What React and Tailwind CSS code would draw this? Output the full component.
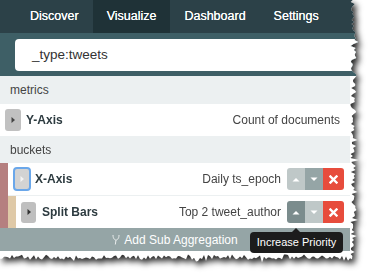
import React from 'react';

// jagged "torn paper" outline for the screenshot crop
function tornClip() {
  let seed = 11;
  const rnd = () => {
    seed = (seed * 16807) % 2147483647;
    return seed / 2147483647;
  };
  const pts = ['0px 0px'];
  for (let y = 0; y <= 256; y += 2) {
    const spike = rnd() > 0.8 ? rnd() * 4 : 0;
    pts.push(`${(353 + rnd() * 5 - 2.5 + spike).toFixed(1)}px ${y}px`);
  }
  for (let x = 352; x >= 0; x -= 2) {
    const spike = rnd() > 0.8 ? rnd() * 4 : 0;
    pts.push(`${x}px ${(257 + rnd() * 5 - 2.5 + spike).toFixed(1)}px`);
  }
  pts.push('0px 258px');
  return `polygon(${pts.join(',')})`;
}

const Caret = ({ color = '#333' }) => (
  <svg width="6" height="8" viewBox="0 0 6 8">
    <path d="M1.5 1 L5 4 L1.5 7 Z" fill={color} />
  </svg>
);

const Arrow = ({ up }) => (
  <svg width="8" height="5" viewBox="0 0 8 5">
    {up ? <path d="M0.5 4.5 L4 1 L7.5 4.5 Z" fill="#fff" /> : <path d="M0.5 0.5 L4 4 L7.5 0.5 Z" fill="#fff" />}
  </svg>
);

const Cross = () => (
  <svg width="9" height="9" viewBox="0 0 9 9">
    <path d="M1.5 1.5 L7.5 7.5 M7.5 1.5 L1.5 7.5" stroke="#fff" strokeWidth="2.4" strokeLinecap="square" />
  </svg>
);

function Controls({ upBg, downBg }) {
  return (
    <div className="flex h-[22px] ml-[6px]">
      <div className={`w-[18px] flex items-center justify-center rounded-l-[3px] ${upBg}`}><Arrow up /></div>
      <div className={`w-[18px] flex items-center justify-center ${downBg}`}><Arrow /></div>
      <div className="w-[21px] flex items-center justify-center bg-[#e74c3c] rounded-r-[3px]"><Cross /></div>
    </div>
  );
}

export default function App() {
  const tabs = ['Discover', 'Visualize', 'Dashboard', 'Settings'];

  return (
    <div className="w-[372px] h-[280px] bg-white overflow-hidden font-['Liberation_Sans',Arial,sans-serif]">
      <div className="[filter:drop-shadow(3px_4px_3px_rgba(0,0,0,0.85))]">
        <div className="relative w-[364px] h-[266px] bg-white" style={{ clipPath: tornClip() }}>

          {/* Nav */}
          <div className="h-[33px] bg-[#2c4148] flex pl-[16px]">
            {tabs.map((t) => (
              <div
                key={t}
                className={`px-[14px] flex items-center text-[12.5px] text-white [text-shadow:0_0_0.4px_#fff] ${t === 'Visualize' ? 'bg-[#1f3237]' : ''}`}
              >
                {t}
              </div>
            ))}
          </div>

          {/* Search */}
          <div className="h-[43px] bg-[#3e5f66] pl-[15px] pt-[6px]">
            <div className="h-[32px] w-[360px] bg-white rounded-[4px] flex items-center pl-[17px] text-[13.5px] text-[#333]">
              _type:tweets
            </div>
          </div>

          {/* Sidebar */}
          <div className="w-[350px] flex flex-col">
            <div className="h-[28px] bg-[#ecf0f1] flex items-center px-[10px] text-[12px] text-[#444]">metrics</div>

            <div className="h-[32px] flex items-center pl-[5px] pr-[10px] bg-white">
              <div className="w-[16px] h-[22px] rounded-[3px] bg-[#c1c1c1] flex items-center justify-center">
                <Caret color="#444" />
              </div>
              <span className="ml-[5px] text-[12px] font-bold text-[#2d3b40]">Y-Axis</span>
              <span className="ml-auto text-[12px] text-[#444]">Count of documents</span>
            </div>

            <div className="h-[27px] bg-[#ecf0f1] flex items-center px-[10px] text-[12px] text-[#444]">buckets</div>

            <div className="flex bg-[#b57f80]">
              <div className="w-[8px]" />
              <div className="flex-1 flex flex-col">
                <div className="h-[33px] flex items-center pl-[5px] pr-[6px] bg-white border-b border-[#ecf0f1]">
                  <div className="w-[18px] h-[24px] rounded-[4px] border-2 border-[#6aa7ea] bg-[#d3d3d3] flex items-center justify-center">
                    <Caret color="#f4f4f4" />
                  </div>
                  <span className="ml-[4px] text-[12px] font-bold text-[#2d3b40]">X-Axis</span>
                  <span className="ml-auto text-[12px] text-[#444]">Daily ts_epoch</span>
                  <Controls upBg="bg-[#bfc8c8]" downBg="bg-[#95a5a6]" />
                </div>
                <div className="flex h-[32px] bg-[#dfc9a7]">
                  <div className="w-[8px]" />
                  <div className="flex-1 flex items-center pl-[5px] pr-[6px] bg-white">
                    <div className="w-[15px] h-[21px] rounded-[3px] bg-[#bfbfbf] flex items-center justify-center">
                      <Caret color="#333" />
                    </div>
                    <span className="ml-[6px] text-[12px] font-bold text-[#2d3b40]">Split Bars</span>
                    <span className="ml-auto text-[12px] text-[#444]">Top 2 tweet_author</span>
                    <Controls upBg="bg-[#7b8c8d]" downBg="bg-[#bfc8c8]" />
                  </div>
                </div>
              </div>
            </div>

            <div className="h-[23px] bg-[#95a5a6] flex items-center justify-center text-[12px] text-white">
              <svg width="8" height="11" viewBox="0 0 8 11" className="mr-[4px] opacity-80">
                <path d="M1 1 C1 5 3 6 4 6 C5 6 7 5 7 1 M4 6 L3.3 10.5" stroke="#fff" strokeWidth="1" fill="none" />
              </svg>
              Add Sub Aggregation
            </div>
          </div>

          {/* Tooltip */}
          <div className="absolute left-[250px] top-[232px] w-[93px] h-[21px] bg-[#1c1c1c] rounded-[4px] flex items-center justify-center text-[11px] text-white">
            <div className="absolute -top-[4px] left-[42px] w-0 h-0 border-l-[4px] border-r-[4px] border-b-[4px] border-l-transparent border-r-transparent border-b-[#1c1c1c]" />
            Increase Priority
          </div>
        </div>
      </div>
    </div>
  );
}
